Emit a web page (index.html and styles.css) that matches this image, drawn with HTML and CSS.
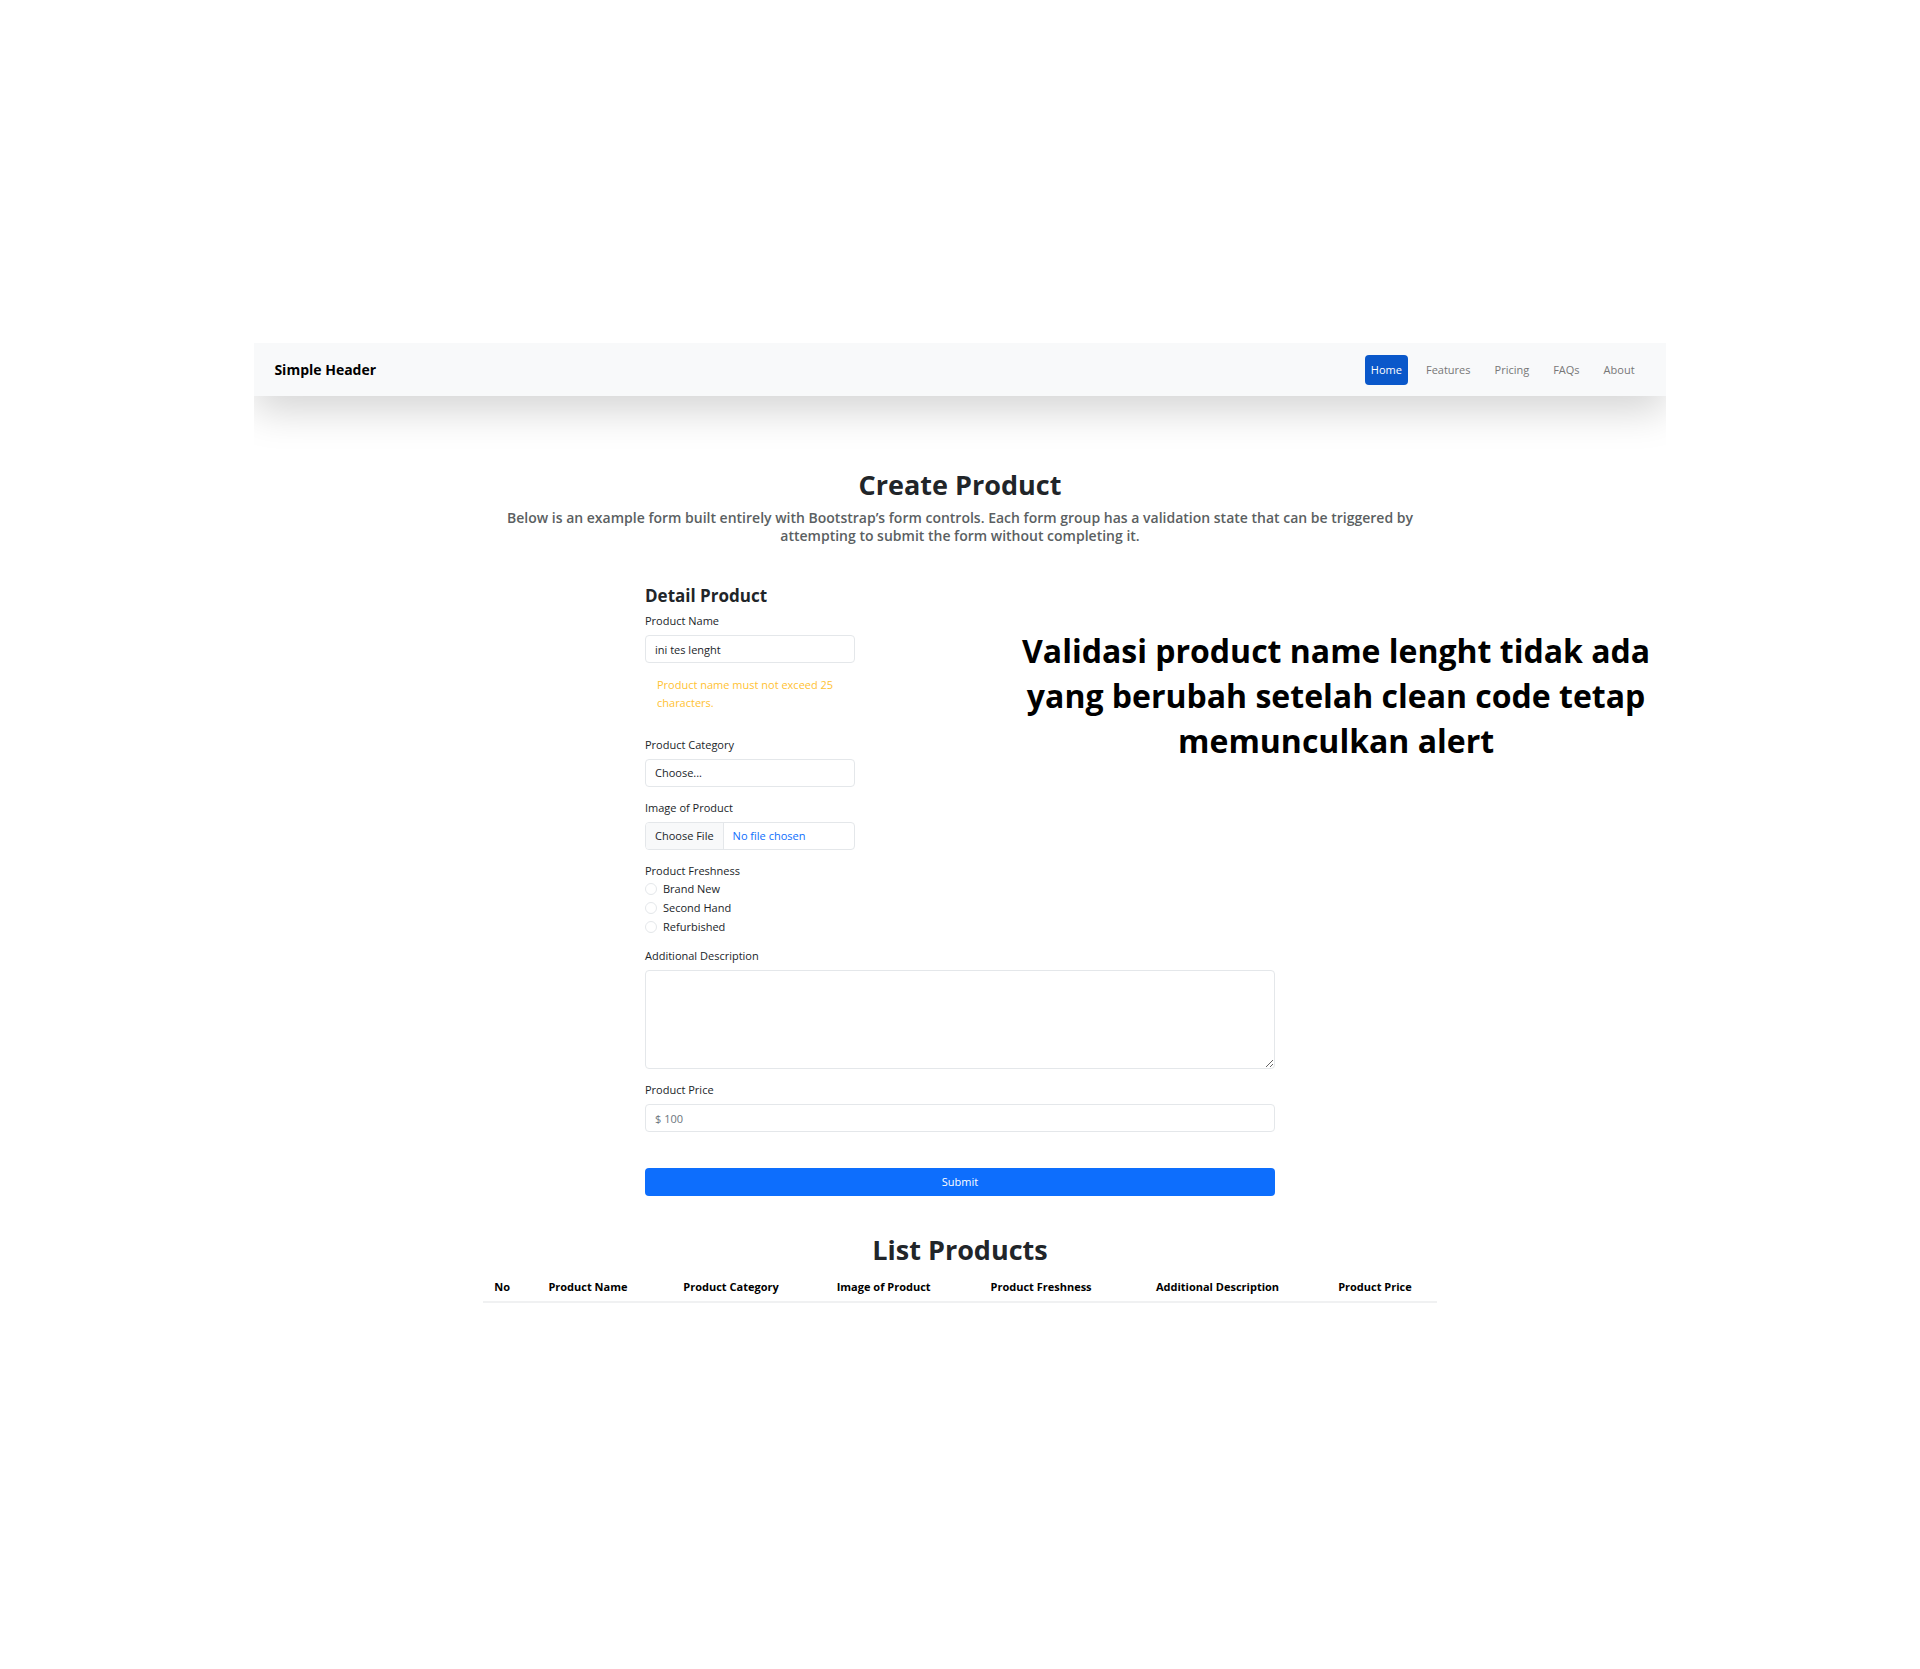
FILE: index.html
```html
<!DOCTYPE html>
<html lang="en">
<head>
<meta charset="utf-8">
<meta name="viewport" content="width=device-width, initial-scale=1">
<title>Create Product</title>
<link rel="stylesheet" href="styles.css">
</head>
<body>
<div class="page">
  <header class="site-header">
    <a class="brand" href="#">Simple Header</a>
    <nav class="site-nav">
      <a class="nav-link active" href="#">Home</a>
      <a class="nav-link" href="#">Features</a>
      <a class="nav-link" href="#">Pricing</a>
      <a class="nav-link" href="#">FAQs</a>
      <a class="nav-link" href="#">About</a>
    </nav>
  </header>

  <main class="content">
    <section class="intro">
      <h1 class="title">Create Product</h1>
      <p class="lead">Below is an example form built entirely with Bootstrap’s form controls. Each form group has a validation state that can be triggered by attempting to submit the form without completing it.</p>
    </section>

    <form class="product-form">
      <h2 class="form-title">Detail Product</h2>
      <div class="field narrow">
        <label for="name">Product Name</label>
        <input class="control" id="name" type="text" value="ini tes lenght">
        <p class="warning">Product name must not exceed 25 characters.</p>
      </div>
      <div class="field narrow">
        <label for="category">Product Category</label>
        <select class="control" id="category"><option>Choose...</option></select>
      </div>
      <div class="field narrow">
        <label for="image">Image of Product</label>
        <input class="control file" id="image" type="file">
      </div>
      <fieldset class="field choices">
        <legend>Product Freshness</legend>
        <label class="choice"><input type="radio" name="freshness">Brand New</label>
        <label class="choice"><input type="radio" name="freshness">Second Hand</label>
        <label class="choice"><input type="radio" name="freshness">Refurbished</label>
      </fieldset>
      <div class="field">
        <label for="description">Additional Description</label>
        <textarea class="control area" id="description"></textarea>
      </div>
      <div class="field">
        <label for="price">Product Price</label>
        <input class="control" id="price" type="text" placeholder="$ 100">
      </div>
      <button class="submit" type="submit">Submit</button>
    </form>

    <section class="products">
      <h2 class="title">List Products</h2>
      <table class="product-table">
        <colgroup>
          <col class="c-no"><col class="c-name"><col class="c-category"><col class="c-image"><col class="c-fresh"><col class="c-desc"><col class="c-price">
        </colgroup>
        <thead>
          <tr>
            <th scope="col">No</th>
            <th scope="col">Product Name</th>
            <th scope="col">Product Category</th>
            <th scope="col">Image of Product</th>
            <th scope="col">Product Freshness</th>
            <th scope="col">Additional Description</th>
            <th scope="col">Product Price</th>
          </tr>
        </thead>
      </table>
    </section>
  </main>

  <p class="note">Validasi product name lenght tidak ada yang berubah setelah clean code tetap memunculkan alert</p>
</div>
</body>
</html>
```
FILE: styles.css
```css
*, *::before, *::after { box-sizing: border-box; }

body {
  margin: 0;
  background: #fff;
  color: #212529;
  font-family: "Open Sans", "Noto Sans", sans-serif;
  font-size: 11px;
  line-height: 18px;
}

h1, h2, p { margin: 0; }

.page {
  position: relative;
  width: 73.5%;
  margin: 343px auto;
  overflow: hidden;
}

.site-header {
  display: flex;
  align-items: center;
  justify-content: space-between;
  padding: 12px 25px 11px 20px;
  background: #f8f9fa;
  box-shadow: 0 14px 40px rgba(0, 0, 0, .175);
}

.brand {
  color: #000;
  font-size: 14px;
  font-weight: 700;
  text-decoration: none;
}

.site-nav { display: flex; gap: 12px; }

.nav-link {
  padding: 6px;
  border-radius: 4px;
  color: #777;
  text-decoration: none;
}

.nav-link.active { background: #0a58ca; color: #fff; }

.content {
  display: flex;
  flex-direction: column;
  align-items: center;
  padding-top: 71px;
}

.intro, .products { width: 100%; max-width: 954px; text-align: center; }

.title { font-size: 27px; font-weight: 700; line-height: 36px; }

.lead {
  padding: 6px 24px 0;
  color: #5b5f62;
  font-size: 14px;
  font-weight: 600;
}

.product-form { width: 100%; max-width: 630px; padding-top: 40px; }

.form-title { font-size: 17px; font-weight: 700; line-height: 22px; padding-bottom: 5px; }

.field { display: flex; flex-direction: column; margin: 0 0 12px; }
.field > label { padding-bottom: 5px; }
.narrow { max-width: 210px; }

.control {
  width: 100%;
  height: 28px;
  padding: 4px 9px;
  border: 1px solid #e4e7ea;
  border-radius: 4px;
  background: #fff;
  color: #212529;
  font: inherit;
  appearance: none;
}

.control::placeholder { color: #6c757d; opacity: 1; }

.warning { padding: 13px 12px 12px; color: #ffc233; }

.file { padding: 0; color: #0d6efd; line-height: 26px; overflow: hidden; }

.file::file-selector-button {
  height: 26px;
  margin: 0 9px 0 0;
  padding: 0 9px;
  border: 0;
  border-right: 1px solid #e4e7ea;
  background: #f8f9fa;
  color: #212529;
  font: inherit;
}

.choices { margin-bottom: 11px; padding: 0; border: 0; }
.choices legend { padding: 0; line-height: 17px; }

.choice { display: flex; align-items: center; gap: 6px; height: 19px; }
.choices > .choice { padding: 0; }

.choice input {
  width: 12px;
  height: 12px;
  margin: 0;
  border: 1px solid #e4e7ea;
  border-radius: 50%;
  background: #fff;
  appearance: none;
}

.area { height: 99px; resize: vertical; }

.submit {
  width: 100%;
  height: 28px;
  margin-top: 24px;
  border: 0;
  border-radius: 4px;
  background: #0d6efd;
  color: #fff;
  font: inherit;
}

.products { padding-top: 36px; }

.product-table { width: 100%; table-layout: fixed; border-collapse: collapse; color: #000; }
.product-table th { padding: 10px 0 5px; border-bottom: 2px solid #f0f1f2; font-weight: 700; white-space: nowrap; }

.c-no { width: 4%; }
.c-name { width: 14%; }
.c-category { width: 16%; }
.c-image { width: 16%; }
.c-fresh { width: 17%; }
.c-desc { width: 20%; }
.c-price { width: 13%; }

.note {
  position: absolute;
  top: 285px;
  right: 0;
  width: 46.7%;
  color: #000;
  font-size: 32px;
  font-weight: 700;
  line-height: 45px;
  text-align: center;
}
```
